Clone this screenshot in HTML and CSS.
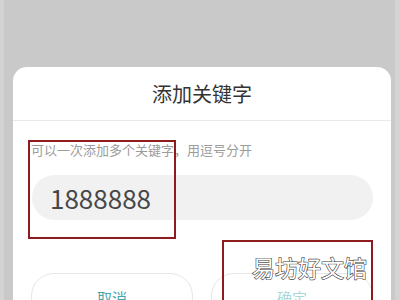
FILE: index.html
```html
<!DOCTYPE html>
<html lang="zh">
<head>
<meta charset="utf-8">
<link rel="stylesheet" href="styles.css">
</head>
<body>
<div class="screen">
  <div class="card">
    <div class="card-header">添加关键字</div>
    <div class="card-body">
      <div class="hint">可以一次添加多个关键字，用逗号分开</div>
      <div class="input">1888888</div>
      <div class="actions">
        <div class="btn btn-cancel">取消</div>
        <div class="btn btn-ok">确定</div>
      </div>
    </div>
  </div>
  <div class="mark mark-input"></div>
  <div class="mark mark-ok"></div>
  <div class="watermark">易坊好文馆</div>
</div>
</body>
</html>
```
FILE: styles.css
```css
html, body {
  margin: 0;
  padding: 0;
}
body {
  font-family: "Noto Sans CJK SC", "Noto Sans", sans-serif;
  background: #c9c9c9;
}
.screen {
  position: relative;
  width: 400px;
  height: 300px;
  overflow: hidden;
  box-sizing: border-box;
  padding: 67px 0 0 13px;
  background: linear-gradient(to right, #d3d3d3 0, #d3d3d3 4px, #c9c9c9 4px, #c9c9c9 395px, #d3d3d3 395px);
}
.card {
  width: 378px;
  height: 280px;
  background: #fff;
  border-radius: 14px;
}
.card-header {
  height: 53px;
  display: flex;
  align-items: center;
  justify-content: center;
  font-size: 20px;
  color: #333;
  border-bottom: 1px solid #e9e9e9;
}
.card-body {
  padding: 20px 18px 0 18px;
}
.hint {
  font-size: 13px;
  line-height: 18px;
  color: #9c9c9c;
  padding-left: 0;
  white-space: nowrap;
}
.input {
  margin: 16px 0 0 1px;
  height: 45px;
  border-radius: 23px;
  background: #f1f1f1;
  display: flex;
  align-items: center;
  padding-left: 18px;
  font-size: 26px;
  color: #474747;
}
.actions {
  margin-top: 53px;
  display: flex;
  gap: 18px;
}
.btn {
  flex: 1;
  height: 46px;
  border: 1px solid #e6e6e6;
  border-radius: 23px;
  display: flex;
  align-items: center;
  justify-content: center;
  font-size: 15px;
}
.btn-cancel {
  color: #45a5ae;
}
.btn-ok {
  color: #a9d9da;
}
.mark {
  position: absolute;
  border: 2.5px solid #8e1b1e;
  box-sizing: border-box;
}
.mark-input {
  left: 28px;
  top: 140px;
  width: 148px;
  height: 99px;
}
.mark-ok {
  left: 222px;
  top: 240px;
  width: 151px;
  height: 80px;
}
.watermark {
  position: absolute;
  left: 252px;
  top: 253px;
  font-size: 23px;
  line-height: 28px;
  color: #fff;
  -webkit-text-stroke: 1.2px #3a3a3a;
  paint-order: stroke fill;
  white-space: nowrap;
}
```
